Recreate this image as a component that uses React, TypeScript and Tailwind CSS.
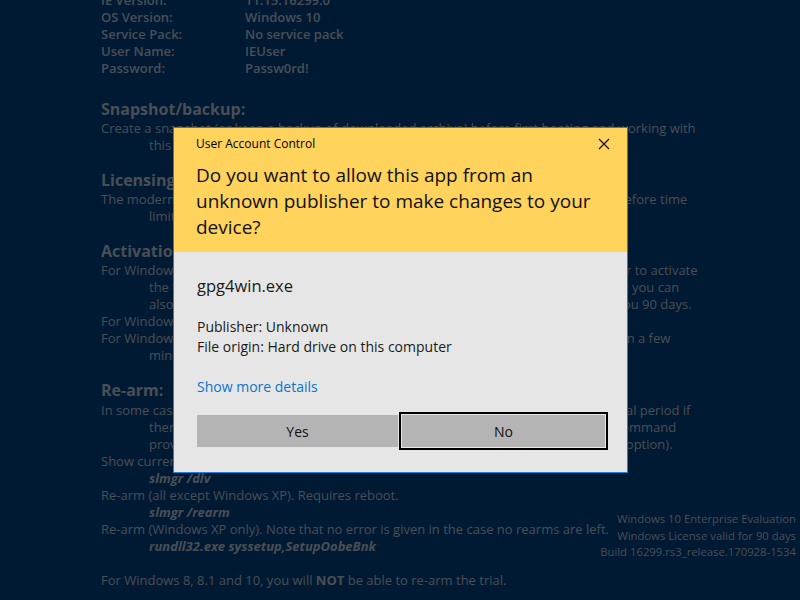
import React from 'react';

const font = { fontFamily: '"Open Sans", "Noto Sans", sans-serif' };

function Info({ label, value }: { label: string; value: string }) {
  return (
    <div className="flex font-semibold">
      <span className="w-[144px]">{label}</span>
      <span>{value}</span>
    </div>
  );
}

function Heading({ children, className }: { children: React.ReactNode; className: string }) {
  return <div className={className + ' text-[16px] leading-[20px] font-bold'}>{children}</div>;
}

function Indent({ children, cmd }: { children: React.ReactNode; cmd?: boolean }) {
  return <div className={cmd ? 'pl-[48px] font-bold italic' : 'pl-[48px]'}>{children}</div>;
}

function Desktop() {
  return (
    <div className="pl-[101px] -mt-[8px] text-[13px] leading-[17px] text-[#4a4f56] whitespace-nowrap">
      <Info label="IE Version:" value="11.15.16299.0" />
      <Info label="OS Version:" value="Windows 10" />
      <Info label="Service Pack:" value="No service pack" />
      <Info label="User Name:" value="IEUser" />
      <Info label="Password:" value="Passw0rd!" />

      <Heading className="mt-[22px] mb-[1px]">Snapshot/backup:</Heading>
      <div>Create a snapshot (or keep a backup of downloaded archive) before first booting and working with</div>
      <Indent>this virtual machine, so you can quickly reset it after the trial expires.</Indent>

      <Heading className="mt-[16px] mb-[1px]">Licensing:</Heading>
      <div>The modern.ie virtual machines are using evaluation versions of Windows and are therefore time</div>
      <Indent>limited to 90 days.</Indent>

      <Heading className="mt-[16px] mb-[1px]">Activation:</Heading>
      <div>For Windows 7, 8, 8.1 and 10 please connect the virtual machine to the internet in order to activate</div>
      <Indent>the trial. The license will be activated automatically upon the very first boot, but you can</Indent>
      <Indent>also run slmgr /ato from an admin prompt to activate manually. This will give you 90 days.</Indent>
      <div>For Windows Vista no activation is required.</div>
      <div>For Windows XP activation happens automatically after connecting to the internet within a few</div>
      <Indent>minutes.</Indent>

      <Heading className="mt-[16px] mb-[2px]">Re-arm:</Heading>
      <div>In some cases you may be able to extend the evaluation by re-arming its license and trial period if</div>
      <Indent>there are rearms left. Open an administrative command prompt and run the command</Indent>
      <Indent>provided below (check the number of remaining rearms with the detailed view option).</Indent>
      <div>Show current license status and remaining rearms:</div>
      <Indent cmd>slmgr /dlv</Indent>
      <div>Re-arm (all except Windows XP). Requires reboot.</div>
      <Indent cmd>slmgr /rearm</Indent>
      <div>Re-arm (Windows XP only). Note that no error is given in the case no rearms are left.</div>
      <Indent cmd>rundll32.exe syssetup,SetupOobeBnk</Indent>
      <div className="h-[17px]" />
      <div>
        For Windows 8, 8.1 and 10, you will <span className="font-bold">NOT</span> be able to re-arm the trial.
      </div>
    </div>
  );
}

function UacDialog() {
  return (
    <div className="absolute left-[173px] top-[127px] w-[455px] h-[346px] border border-[#1a84d6] bg-[#e6e6e6] flex flex-col">
      <div className="bg-[#ffd35c] h-[124px] pl-[22px] pr-[14px] pt-[7px] text-black">
        <div className="flex items-center justify-between h-[17px]">
          <span className="text-[12px]">User Account Control</span>
          <svg width="12" height="12" viewBox="0 0 12 12" className="mr-[3px]">
            <path d="M1 1 L11 11 M11 1 L1 11" stroke="#111" strokeWidth="1.2" />
          </svg>
        </div>
        <div className="mt-[10px] text-[19px] leading-[26px] text-[#111]">
          Do you want to allow this app from an unknown publisher to make changes to your device?
        </div>
      </div>
      <div className="flex-1 pl-[23px] pr-[19px] pt-[23px] text-[#1a1a1a]">
        <div className="text-[16.5px] leading-[22px]">gpg4win.exe</div>
        <div className="mt-[20px] text-[14px] leading-[20px]">
          <div>Publisher: Unknown</div>
          <div>File origin: Hard drive on this computer</div>
        </div>
        <div className="mt-[20px] text-[14px] leading-[20px] text-[#0a74d0]">Show more details</div>
        <div className="mt-[15px] flex">
          <button className="shrink-0 w-[201px] h-[32px] mt-[3px] bg-[#b4b4b4] text-[14px] text-[#111]">Yes</button>
          <button className="shrink-0 w-[209px] h-[38px] ml-[1px] border-2 border-black bg-[#b4b4b4] text-[14px] text-[#111] shadow-[inset_0_0_0_1px_#e8e8e8]">No</button>
        </div>
      </div>
    </div>
  );
}

export default function App() {
  return (
    <div className="relative w-[800px] h-[600px] overflow-hidden bg-[#011a33]" style={font}>
      <Desktop />
      <div className="absolute right-[4px] top-[511px] text-right text-[11.3px] leading-[16.5px] text-[#4a4f56]">
        <div>Windows 10 Enterprise Evaluation</div>
        <div>Windows License valid for 90 days</div>
        <div>Build 16299.rs3_release.170928-1534</div>
      </div>
      <UacDialog />
    </div>
  );
}
